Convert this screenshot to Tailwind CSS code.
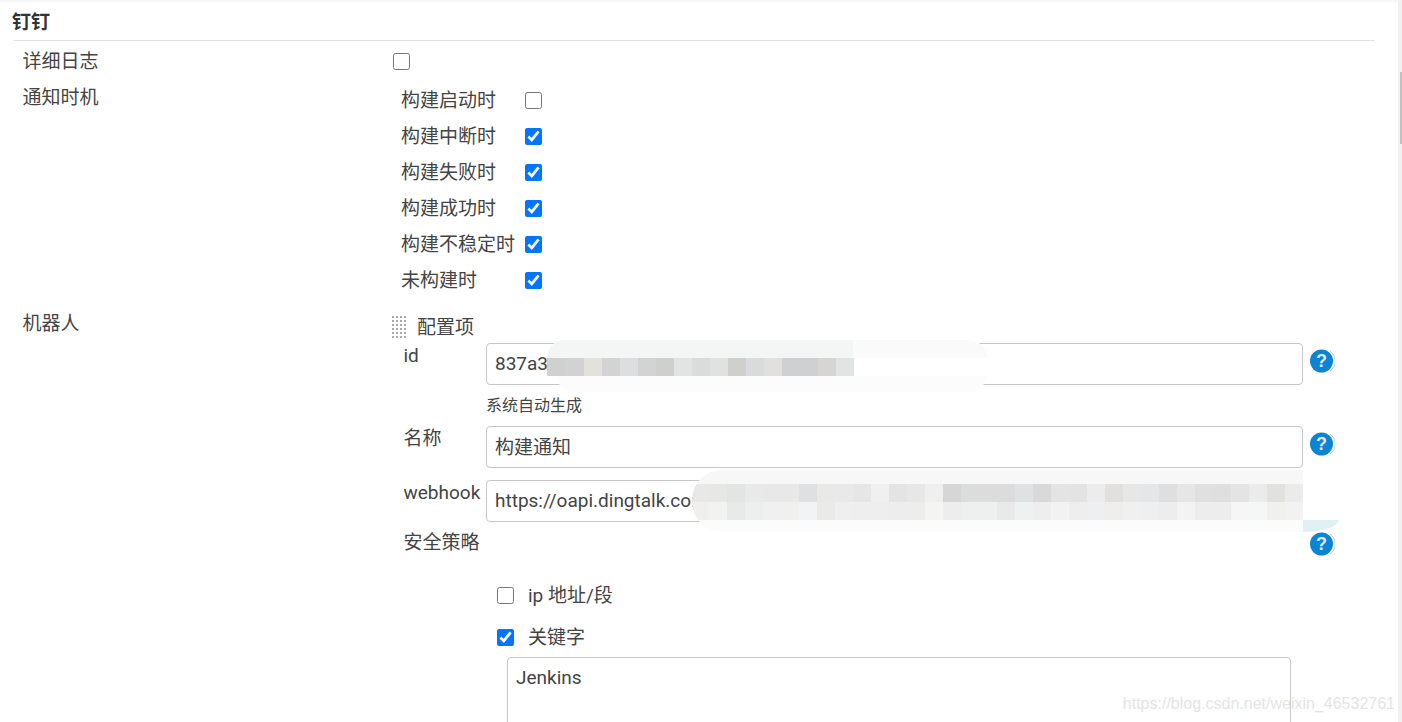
<!DOCTYPE html>
<html lang="zh-CN">
<head>
  <meta charset="UTF-8" />
  <meta name="viewport" content="width=device-width, initial-scale=1.0" />
  <title>钉钉</title>
  <script src="https://cdn.jsdelivr.net/npm/@tailwindcss/browser@4"></script>
</head>
<body class="bg-white">
  <div class="relative h-[722px] w-[1402px] overflow-hidden bg-white text-[19px] leading-[24px] text-[#444] font-['Roboto','Noto_Sans_CJK_SC',sans-serif]">

    <!-- section -->
    <div class="ml-[13px] w-[1362px]">
      <h2 class="h-[41px] border-b border-[#e2e2e2] pt-[11px] text-[19px] leading-[24px] font-bold text-[#333]"><span class="ml-[-1px]">钉钉</span></h2>

      <div class="grid grid-cols-[370.5px_1fr] pl-[9.5px] pt-[2px]">
        <div class="flex h-[36px] items-center pt-[2px]">详细日志</div>
        <div class="flex h-[36px] items-center">
          <input type="checkbox" class="m-0 h-[17px] w-[17px]" />
        </div>

        <div class="flex h-[36px] items-center pt-[2px]">通知时机</div>
        <div class="pt-[3px] pl-[8px]">
          <div class="flex h-[36px] items-center"><span class="mt-[2px] w-[124px]">构建启动时</span><input type="checkbox" class="m-0 h-[17px] w-[17px]" /></div>
          <div class="flex h-[36px] items-center"><span class="mt-[2px] w-[124px]">构建中断时</span><input type="checkbox" checked class="m-0 h-[17px] w-[17px]" /></div>
          <div class="flex h-[36px] items-center"><span class="mt-[2px] w-[124px]">构建失败时</span><input type="checkbox" checked class="m-0 h-[17px] w-[17px]" /></div>
          <div class="flex h-[36px] items-center"><span class="mt-[2px] w-[124px]">构建成功时</span><input type="checkbox" checked class="m-0 h-[17px] w-[17px]" /></div>
          <div class="flex h-[36px] items-center"><span class="mt-[2px] w-[124px]">构建不稳定时</span><input type="checkbox" checked class="m-0 h-[17px] w-[17px]" /></div>
          <div class="flex h-[36px] items-center"><span class="mt-[2px] w-[124px]">未构建时</span><input type="checkbox" checked class="m-0 h-[17px] w-[17px]" /></div>
        </div>

        <div class="mt-[7px] flex h-[36px] items-center pt-[2px]">机器人</div>
        <div class="mt-[7px]">
          <!-- repeatable item head -->
          <div class="flex h-[38px] items-start pt-[10px]">
            <div class="ml-[-2px] h-[24px] w-[16px] bg-[radial-gradient(#a8a8a8_1px,transparent_1.2px)] bg-[length:4px_4px]"></div>
            <span class="mt-[1px] ml-[10px]">配置项</span>
          </div>

          <div class="flex">
            <label class="w-[93px] pt-[1px] pl-[10.5px]">id</label>
            <input value="837a3" class="h-[42px] w-[817px] rounded-[4px] border border-[#c6c6c6] px-[8px] pb-[2px]" />
            <svg class="mt-[6px] ml-[7px] h-[25px] w-[25px]" viewBox="0 0 25 25">
              <path d="M20 2 A12 12 0 0 1 20 22" fill="none" stroke="#c4c4c4" stroke-width="1" />
              <circle cx="11.5" cy="12" r="11.5" fill="#0b84d3" />
              <text x="11.5" y="18" text-anchor="middle" font-size="18" font-weight="700" font-family="Liberation Sans" fill="#dfe9ef">?</text>
            </svg>
          </div>
          <div class="flex h-[41px] items-center pl-[93px] text-[16px]">系统自动生成</div>

          <div class="flex">
            <label class="w-[93px] pt-[1px] pl-[10.5px]">名称</label>
            <input value="构建通知" class="h-[42px] w-[817px] rounded-[4px] border border-[#c6c6c6] px-[8px] pb-[3px]" />
            <svg class="mt-[6px] ml-[7px] h-[25px] w-[25px]" viewBox="0 0 25 25">
              <path d="M20 2 A12 12 0 0 1 20 22" fill="none" stroke="#c4c4c4" stroke-width="1" />
              <circle cx="11.5" cy="12" r="11.5" fill="#0b84d3" />
              <text x="11.5" y="18" text-anchor="middle" font-size="18" font-weight="700" font-family="Liberation Sans" fill="#dfe9ef">?</text>
            </svg>
          </div>

          <div class="mt-[12px] flex">
            <label class="w-[93px] pt-[1px] pl-[10.5px]">webhook</label>
            <input value="https://oapi.dingtalk.com/robot/send" class="h-[42px] w-[817px] rounded-[4px] border border-[#c6c6c6] px-[8px] pb-[2px]" />
          </div>

          <div class="mt-[8px] flex h-[53px]">
            <label class="w-[910px] pt-[1px] pl-[10.5px]">安全策略</label>
            <svg class="mt-[2px] ml-[7px] h-[25px] w-[25px]" viewBox="0 0 25 25">
              <path d="M20 2 A12 12 0 0 1 20 22" fill="none" stroke="#c4c4c4" stroke-width="1" />
              <circle cx="11.5" cy="12" r="11.5" fill="#0b84d3" />
              <text x="11.5" y="18" text-anchor="middle" font-size="18" font-weight="700" font-family="Liberation Sans" fill="#dfe9ef">?</text>
            </svg>
          </div>

          <div class="ml-[104px] flex h-[24px] items-center gap-[14px]">
            <input type="checkbox" class="m-0 h-[17px] w-[17px]" />
            <span class="mt-[2px]">ip 地址/段</span>
          </div>
          <div class="mt-[18px] ml-[104px] flex h-[24px] items-center gap-[14px]">
            <input type="checkbox" checked class="m-0 h-[17px] w-[17px]" />
            <span class="mt-[2px]">关键字</span>
          </div>
          <textarea class="mt-[8px] ml-[114px] block h-[110px] w-[784px] resize-none rounded-[4px] border border-[#c6c6c6] px-[8px] py-[8px]">Jenkins</textarea>
        </div>
      </div>
    </div>

    <!-- top edge shadow and scrollbar -->
    <div class="absolute top-0 left-0 h-[4px] w-full bg-gradient-to-b from-[#f5f5f5] to-white"></div>
    <div class="absolute top-0 right-0 h-full w-[4px] bg-[#f1f1f1]">
      <div class="absolute top-[72px] right-0 h-[72px] w-[2px] bg-[#c1c1c1]"></div>
    </div>

    <!-- mosaic over the id value -->
    <div class="absolute top-[340px] left-[547px] h-[52px] w-[440px] overflow-hidden rounded-[18px]">
      <div class="flex h-[18px] bg-[#fafafa]"><div class="h-full w-[306px] bg-[#f4f5f5]"></div></div>
      <div class="flex h-[18px] bg-white">
        <div class="h-full w-[19px] bg-[#d0d0d0]"></div><div class="h-full w-[18px] bg-[#d2d2d2]"></div><div class="h-full w-[18px] bg-[#e2e1dc]"></div><div class="h-full w-[18px] bg-[#d3d3d3]"></div><div class="h-full w-[18px] bg-[#dcdee0]"></div><div class="h-full w-[18px] bg-[#d2d3d2]"></div><div class="h-full w-[18px] bg-[#cfcfcc]"></div><div class="h-full w-[18px] bg-[#e2e4e3]"></div><div class="h-full w-[18px] bg-[#dadbdb]"></div><div class="h-full w-[18px] bg-[#e0e1e1]"></div><div class="h-full w-[18px] bg-[#d0cfcc]"></div><div class="h-full w-[18px] bg-[#d9dadc]"></div><div class="h-full w-[18px] bg-[#e2e0dc]"></div><div class="h-full w-[18px] bg-[#cfd0d2]"></div><div class="h-full w-[18px] bg-[#cfd0d2]"></div><div class="h-full w-[18px] bg-[#d6d5d2]"></div><div class="h-full w-[18px] bg-[#e2e3e5]"></div>
      </div>
      <div class="ml-[10px] h-[16px] rounded-bl-[30px] bg-[#fcfcfc]"></div>
    </div>

    <!-- mosaic over the webhook value -->
    <div class="absolute top-[470px] left-[692px] h-[62px] w-[611px] overflow-hidden rounded-l-[30px]">
      <div class="h-[14px] bg-[#f7f7f7]"></div>
      <div class="flex h-[18px]">
        <div class="h-full w-[17px] bg-[#e8e8e8]"></div><div class="h-full w-[18px] bg-[#e7e7e5]"></div><div class="h-full w-[18px] bg-[#e3e4e4]"></div><div class="h-full w-[18px] bg-[#e9e9e9]"></div><div class="h-full w-[18px] bg-[#e8e8e8]"></div><div class="h-full w-[18px] bg-[#e8e8e8]"></div><div class="h-full w-[18px] bg-[#dfe0e2]"></div><div class="h-full w-[18px] bg-[#e9e9e7]"></div><div class="h-full w-[18px] bg-[#e9e9e9]"></div><div class="h-full w-[18px] bg-[#e6e6e6]"></div><div class="h-full w-[18px] bg-[#f0f0f0]"></div><div class="h-full w-[18px] bg-[#e4e4e4]"></div><div class="h-full w-[18px] bg-[#e7e7e7]"></div><div class="h-full w-[18px] bg-[#efefef]"></div><div class="h-full w-[18px] bg-[#d6d6d6]"></div><div class="h-full w-[18px] bg-[#dbdcdc]"></div><div class="h-full w-[18px] bg-[#dcdcdc]"></div><div class="h-full w-[18px] bg-[#dcdcdc]"></div><div class="h-full w-[18px] bg-[#dfe1e3]"></div><div class="h-full w-[18px] bg-[#d9d9d9]"></div><div class="h-full w-[18px] bg-[#e4e4e4]"></div><div class="h-full w-[18px] bg-[#e3e3e3]"></div><div class="h-full w-[18px] bg-[#ebeceb]"></div><div class="h-full w-[18px] bg-[#e2e0dd]"></div><div class="h-full w-[18px] bg-[#e7e7e7]"></div><div class="h-full w-[18px] bg-[#e5e6e8]"></div><div class="h-full w-[18px] bg-[#dfdfdf]"></div><div class="h-full w-[18px] bg-[#e6e6e6]"></div><div class="h-full w-[18px] bg-[#e0e0e0]"></div><div class="h-full w-[18px] bg-[#dfdfdf]"></div><div class="h-full w-[18px] bg-[#e4e4e4]"></div><div class="h-full w-[18px] bg-[#ebebeb]"></div><div class="h-full w-[18px] bg-[#e1e1df]"></div><div class="h-full w-[18px] bg-[#ebebeb]"></div>
      </div>
      <div class="flex h-[18px]">
        <div class="h-full w-[17px] bg-[#f0efee]"></div><div class="h-full w-[18px] bg-[#f1f3f3]"></div><div class="h-full w-[18px] bg-[#e9e9e9]"></div><div class="h-full w-[18px] bg-[#edeeee]"></div><div class="h-full w-[18px] bg-[#f0f0f0]"></div><div class="h-full w-[18px] bg-[#f0f0ee]"></div><div class="h-full w-[18px] bg-[#f2f3f5]"></div><div class="h-full w-[18px] bg-[#eaeae8]"></div><div class="h-full w-[18px] bg-[#efefef]"></div><div class="h-full w-[18px] bg-[#eeeeee]"></div><div class="h-full w-[18px] bg-[#eeeeee]"></div><div class="h-full w-[18px] bg-[#ededed]"></div><div class="h-full w-[18px] bg-[#ededec]"></div><div class="h-full w-[18px] bg-[#f4f4f3]"></div><div class="h-full w-[18px] bg-[#ededed]"></div><div class="h-full w-[18px] bg-[#eeefef]"></div><div class="h-full w-[18px] bg-[#eeefef]"></div><div class="h-full w-[18px] bg-[#e9e9e9]"></div><div class="h-full w-[18px] bg-[#eff0f0]"></div><div class="h-full w-[18px] bg-[#eeeeee]"></div><div class="h-full w-[18px] bg-[#f2f2f2]"></div><div class="h-full w-[18px] bg-[#eeeeee]"></div><div class="h-full w-[18px] bg-[#edf0f0]"></div><div class="h-full w-[18px] bg-[#efeeec]"></div><div class="h-full w-[18px] bg-[#f0f0f0]"></div><div class="h-full w-[18px] bg-[#efefef]"></div><div class="h-full w-[18px] bg-[#ededed]"></div><div class="h-full w-[18px] bg-[#f3f3f3]"></div><div class="h-full w-[18px] bg-[#ededed]"></div><div class="h-full w-[18px] bg-[#ededed]"></div><div class="h-full w-[18px] bg-[#f6f6f6]"></div><div class="h-full w-[18px] bg-[#f5f6f6]"></div><div class="h-full w-[18px] bg-[#f0f0ee]"></div><div class="h-full w-[18px] bg-[#f2f2f2]"></div>
      </div>
      <div class="h-[12px] bg-[#fcfcfc]"></div>
    </div>
    <div class="absolute top-[520px] left-[1303px] h-[12px] w-[36px] rounded-br-[36px_12px] bg-[#e1eff7]"></div>

    <!-- watermark -->
    <div class="absolute top-[695px] right-[7px] font-['Liberation_Sans',sans-serif] text-[16px] leading-[18px] text-[#e4e4e4]">https://blog.csdn.net/weixin_46532761</div>
  </div>
</body>
</html>
